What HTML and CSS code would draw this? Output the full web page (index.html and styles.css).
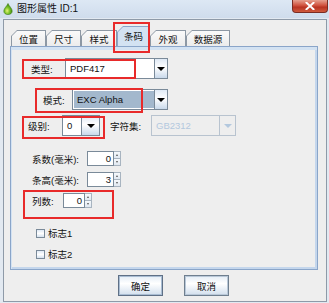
FILE: index.html
```html
<!DOCTYPE html>
<html lang="zh">
<head>
<meta charset="utf-8">
<title>图形属性</title>
<link rel="stylesheet" href="styles.css">
</head>
<body>
<div class="window">
  <div class="titlebar">
    <svg class="app-icon" width="10" height="12" viewBox="0 0 10 12">
      <defs>
        <radialGradient id="drop" cx="0.4" cy="0.65" r="0.6">
          <stop offset="0" stop-color="#e6f27a"/>
          <stop offset="0.5" stop-color="#7cc42a"/>
          <stop offset="1" stop-color="#3f8a12"/>
        </radialGradient>
      </defs>
      <path d="M5 0.5 C6 3 9.2 5.5 9.2 8 C9.2 10.3 7.3 11.6 5 11.6 C2.7 11.6 0.8 10.3 0.8 8 C0.8 5.5 4 3 5 0.5 Z" fill="url(#drop)" stroke="#3d7a18" stroke-width="0.6"/>
    </svg>
    <span class="title">图形属性 ID:1</span>
    <div class="close">
      <svg width="10" height="8" viewBox="0 0 10 8"><path d="M1.5 0.8 L8.5 7.2 M8.5 0.8 L1.5 7.2" stroke="#fff" stroke-width="2" stroke-linecap="square"/></svg>
    </div>
  </div>
  <div class="client">
    <div class="tabs">
      <div class="tab w35">位置</div>
      <div class="tab w35">尺寸</div>
      <div class="tab w36">样式</div>
      <div class="tab selected w33">条码</div>
      <div class="tab w36">外观</div>
      <div class="tab w44">数据源</div>
    </div>
    <div class="panel">
      <div class="row row-type">
        <span class="label lw34">类型:</span>
        <div class="combo cw103"><div class="combo-text">PDF417</div><div class="combo-btn"><span class="arrow"></span></div></div>
      </div>
      <div class="row row-mode">
        <span class="label lw29">模式:</span>
        <div class="combo cw96 selected-combo"><div class="combo-text">EXC Alpha</div><div class="combo-btn"><span class="arrow"></span></div></div>
      </div>
      <div class="row row-level">
        <span class="label lw34">级别:</span>
        <div class="combo cw38"><div class="combo-text">0</div><div class="combo-btn wide"><span class="arrow"></span></div></div>
        <span class="label lw41 charset-label">字符集:</span>
        <div class="combo cw85 disabled"><div class="combo-text">GB2312</div><div class="combo-btn wide16"><span class="arrow"></span></div></div>
      </div>
      <div class="row row-spin first-spin">
        <span class="label lw55">系数(毫米):</span>
        <div class="spinner sw34"><div class="spin-text">0</div><div class="spin-btns"><div class="spin-up"><span class="up"></span></div><div class="spin-down"><span class="down"></span></div></div></div>
      </div>
      <div class="row row-spin">
        <span class="label lw55">条高(毫米):</span>
        <div class="spinner sw34"><div class="spin-text">3</div><div class="spin-btns"><div class="spin-up"><span class="up"></span></div><div class="spin-down"><span class="down"></span></div></div></div>
      </div>
      <div class="row row-spin">
        <span class="label lw31">列数:</span>
        <div class="spinner sw29"><div class="spin-text">0</div><div class="spin-btns"><div class="spin-up"><span class="up"></span></div><div class="spin-down"><span class="down"></span></div></div></div>
      </div>
      <div class="row row-check first-check">
        <span class="checkbox"></span><span class="check-label">标志1</span>
      </div>
      <div class="row row-check">
        <span class="checkbox"></span><span class="check-label">标志2</span>
      </div>
    </div>
    <div class="buttons">
      <div class="btn focused">确定</div>
      <div class="btn">取消</div>
    </div>
  </div>
  <div class="mark mark-tab"></div>
  <div class="mark mark-type"></div>
  <div class="mark mark-mode"></div>
  <div class="mark mark-level"></div>
  <div class="mark mark-cols"></div>
</div>
</body>
</html>
```

FILE: styles.css
```css
* { box-sizing: border-box; }
html, body { margin: 0; padding: 0; }
body {
  width: 329px;
  height: 303px;
  overflow: hidden;
  background: #e2e9f1;
  font-family: "Liberation Sans", "Noto Sans CJK SC", sans-serif;
  font-size: 9.5px;
  color: #111;
}
.window {
  position: relative;
  width: 329px;
  height: 303px;
}
.titlebar {
  height: 18px;
  display: flex;
  align-items: flex-start;
  background: linear-gradient(#dde8f4, #cfdcec);
}
.app-icon {
  margin: 3px 0 0 3px;
  flex: none;
}
.title {
  margin: 2px 0 0 4px;
  font-size: 10px;
  line-height: 14px;
  color: #111;
}
.close {
  margin-left: auto;
  margin-right: 1px;
  width: 36px;
  height: 13px;
  border: 1px solid #7b2c22;
  border-top: none;
  border-radius: 0 0 4px 4px;
  background: linear-gradient(#e6a08f, #d0533f 45%, #b93423 60%, #cf5a3c);
  display: flex;
  align-items: center;
  justify-content: center;
}
.client {
  margin: 1px 2px 0 3px;
  height: 283px;
  border: 1px solid #8e9aa8;
  background: #eeeeee;
  display: flex;
  flex-direction: column;
}
.tabs {
  flex: none;
  margin-top: 6px;
  padding-left: 7px;
  height: 20px;
  display: flex;
  align-items: flex-end;
}
.tab {
  position: relative;
  isolation: isolate;
  height: 16px;
  display: flex;
  align-items: center;
  justify-content: center;
  padding-top: 1px;
  font-size: 9.5px;
  color: #111;
  background: #8d98a4;
  clip-path: polygon(0 6px, 6px 0, 100% 0, 100% 100%, 0 100%);
}
.tab::before {
  content: "";
  position: absolute;
  left: 1px; top: 1px; right: 1px; bottom: 0;
  background: linear-gradient(#fafafa, #ececec);
  clip-path: polygon(0 5px, 5px 0, 100% 0, 100% 100%, 0 100%);
  z-index: -1;
}
.tab.selected {
  height: 20px;
  padding-top: 0;
  background: #8aa5c9;
}
.tab.selected::before {
  background: #d3e2f2;
}
.w33 { width: 33px; }
.w35 { width: 35px; }
.w36 { width: 36px; }
.w44 { width: 44px; }

.panel {
  flex: none;
  margin-left: 6px;
  width: 308px;
  height: 224px;
  border: 1px solid #8aa5c9;
  box-shadow: inset 0 3px 0 #d3e2f2, inset 1px 0 0 #d3e2f2, inset -2px 0 0 #c4d6ec, inset 0 -2px 0 #c4d6ec;
  display: flex;
  flex-direction: column;
}
.row {
  flex: none;
  display: flex;
  align-items: center;
}
.label {
  flex: none;
  white-space: nowrap;
  color: #111;
}
.lw29 { width: 29px; }
.lw31 { width: 31px; }
.lw34 { width: 34px; }
.lw41 { width: 41px; }
.lw55 { width: 55px; }

.row-type { margin-top: 11px; padding-left: 20px; height: 21px; }
.row-mode { margin-top: 10px; padding-left: 32px; height: 21px; }
.row-level { margin-top: 5px; padding-left: 17px; height: 21px; }
.charset-label { margin-left: 10px; }
.row-spin { margin-top: 6px; padding-left: 21px; height: 15px; }
.first-spin { margin-top: 15px; }
.row-check { margin-top: 5px; padding-left: 25px; height: 16px; }
.first-check { margin-top: 17px; }

.combo {
  flex: none;
  height: 21px;
  display: flex;
  border: 1px solid #7a8a99;
  background: #fff;
}
.cw38 { width: 38px; }
.cw85 { width: 85px; }
.cw96 { width: 96px; }
.cw103 { width: 103px; }
.combo-text {
  flex: 1;
  padding-left: 4px;
  display: flex;
  align-items: center;
  font-size: 9.5px;
  color: #111;
  white-space: nowrap;
  overflow: hidden;
}
.combo-btn {
  flex: none;
  width: 13px;
  border-left: 1px solid #7a8a99;
  background: linear-gradient(#dfe9f5, #ffffff 45%, #c9d9eb);
  display: flex;
  align-items: center;
  justify-content: center;
}
.combo-btn.wide { width: 18px; }
.combo-btn.wide16 { width: 16px; }
.arrow {
  width: 0; height: 0;
  border-left: 4px solid transparent;
  border-right: 4px solid transparent;
  border-top: 4px solid #000;
  margin-top: 1px;
}
.selected-combo .combo-text {
  background: #a3b8cd;
  color: #111;
  padding-left: 3px;
  margin: 1px 0 1px 1px;
}
.combo.disabled {
  border-color: #b8c3cf;
  background: #eeeeee;
}
.combo.disabled .combo-text { color: #b3c8de; }
.combo.disabled .combo-btn {
  border-left-color: #b8c3cf;
  background: #eeeeee;
}
.combo.disabled .arrow { border-top-color: #b3c8de; }

.spinner {
  flex: none;
  height: 15px;
  display: flex;
}
.sw34 { width: 34px; }
.sw29 { width: 29px; }
.spin-text {
  flex: 1;
  border: 1px solid #7a8a99;
  background: #fff;
  display: flex;
  align-items: center;
  justify-content: flex-end;
  padding-right: 2px;
  font-size: 9.5px;
  color: #111;
}
.spin-btns {
  flex: none;
  width: 7px;
  display: flex;
  flex-direction: column;
}
.spin-up, .spin-down {
  flex: 1;
  border: 1px solid #a8b4c0;
  border-left: none;
  background: linear-gradient(#f6f9fc, #e0e8f1);
  display: flex;
  align-items: center;
  justify-content: center;
}
.spin-down { border-top: none; }
.up, .down {
  width: 0; height: 0;
  border-left: 1.5px solid transparent;
  border-right: 1.5px solid transparent;
}
.up { border-bottom: 2px solid #555; }
.down { border-top: 2px solid #555; }

.checkbox {
  flex: none;
  width: 9px;
  height: 9px;
  border: 1px solid #7a8a99;
  background: linear-gradient(#dfe9f5, #fff 50%, #d4e1ef);
}
.check-label {
  margin-left: 3px;
  color: #111;
}

.buttons {
  flex: none;
  margin-top: 5px;
  padding-left: 114px;
  display: flex;
  gap: 21px;
}
.btn {
  width: 45px;
  height: 21px;
  border: 1px solid #6f7f8f;
  box-shadow: inset 0 0 0 1px #b9c8d8;
  background: linear-gradient(#e4edf6, #ffffff 40%, #d2dfed);
  display: flex;
  align-items: center;
  justify-content: center;
  color: #111;
  font-size: 9.5px;
}
.btn.focused {
  border-color: #5f7086;
  box-shadow: inset 0 0 0 1px #a9bdd3;
}

.mark {
  position: absolute;
  border: 2px solid #e82a2a;
  pointer-events: none;
}
.mark-tab { left: 113px; top: 22px; width: 37px; height: 31px; }
.mark-type { left: 22px; top: 59px; width: 114px; height: 20px; }
.mark-mode { left: 35px; top: 88px; width: 108px; height: 25px; }
.mark-level { left: 22px; top: 116px; width: 83px; height: 23px; }
.mark-cols { left: 23px; top: 190px; width: 91px; height: 29px; }
```
